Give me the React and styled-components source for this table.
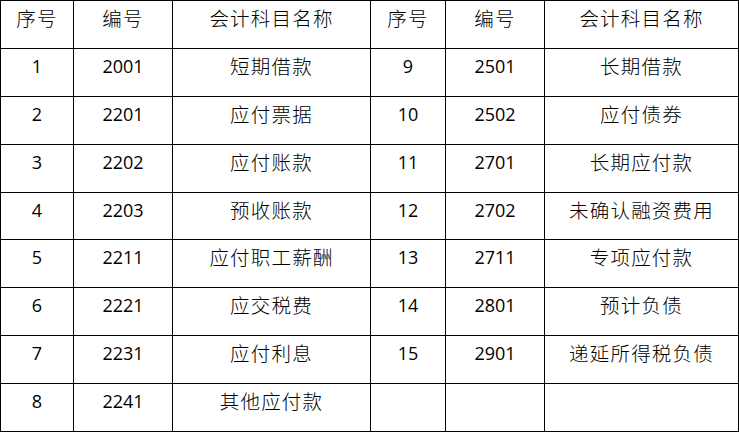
import styled, { createGlobalStyle } from "styled-components";

const GlobalStyle = createGlobalStyle`
  html, body {
    margin: 0;
    padding: 0;
    background: #fff;
  }
  body {
    font-family: "Noto Sans CJK SC", "Noto Sans", sans-serif;
    color: #111;
  }
`;

const left = [
  ["1", "2001", "短期借款"],
  ["2", "2201", "应付票据"],
  ["3", "2202", "应付账款"],
  ["4", "2203", "预收账款"],
  ["5", "2211", "应付职工薪酬"],
  ["6", "2221", "应交税费"],
  ["7", "2231", "应付利息"],
  ["8", "2241", "其他应付款"],
];

const right = [
  ["9", "2501", "长期借款"],
  ["10", "2502", "应付债券"],
  ["11", "2701", "长期应付款"],
  ["12", "2702", "未确认融资费用"],
  ["13", "2711", "专项应付款"],
  ["14", "2801", "预计负债"],
  ["15", "2901", "递延所得税负债"],
  ["", "", ""],
];

const widths = [73, 99, 198, 75, 99, 194];

const Table = styled.table`
  border-collapse: collapse;
  table-layout: fixed;
  width: 739px;
`;

const Row = styled.tr`
  height: 47.9px;
`;

const Cell = styled.td`
  border: 1px solid #000;
  padding: 4px 0 0;
  vertical-align: top;
  text-align: center;
  line-height: 26px;
  font-size: ${(p) => (p.$num ? "18px" : "19.5px")};
  font-family: ${(p) =>
    p.$num
      ? '"Open Sans", "Noto Sans", sans-serif'
      : '"Noto Sans CJK SC", sans-serif'};
  font-weight: ${(p) => (p.$num ? 400 : 300)};
  color: #000;
  letter-spacing: ${(p) => (p.$num ? "0" : "1.2px")};
`;

export default function App() {
  return (
    <>
      <GlobalStyle />
      <Table>
        <colgroup>
          {widths.map((w, i) => (
            <col key={i} style={{ width: w }} />
          ))}
        </colgroup>
        <tbody>
          <Row>
            <Cell>序号</Cell>
            <Cell>编号</Cell>
            <Cell>会计科目名称</Cell>
            <Cell>序号</Cell>
            <Cell>编号</Cell>
            <Cell>会计科目名称</Cell>
          </Row>
          {left.map((l, i) => {
            const r = right[i];
            return (
              <Row key={i}>
                <Cell $num>{l[0]}</Cell>
                <Cell $num>{l[1]}</Cell>
                <Cell>{l[2]}</Cell>
                <Cell $num>{r[0]}</Cell>
                <Cell $num>{r[1]}</Cell>
                <Cell>{r[2]}</Cell>
              </Row>
            );
          })}
        </tbody>
      </Table>
    </>
  );
}
